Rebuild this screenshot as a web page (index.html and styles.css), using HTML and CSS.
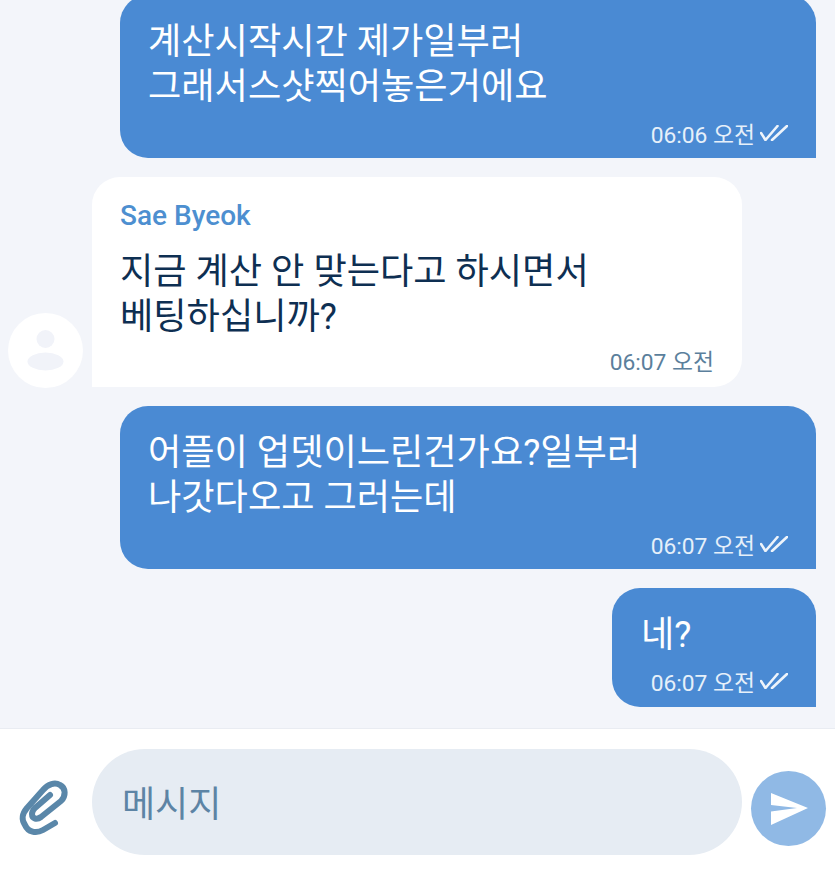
FILE: index.html
```html
<!DOCTYPE html>
<html lang="ko">
<head>
<meta charset="utf-8">
<title>Chat</title>
<link rel="stylesheet" href="styles.css">
</head>
<body>
<div class="screen">
  <main class="messages">
    <div class="row out">
      <div class="bubble out-bubble wide">
        <p class="text">계산시작시간 제가일부러<br>그래서스샷찍어놓은거에요</p>
        <div class="meta"><span>06:06 오전</span><svg class="ticks" viewBox="0 0 28 16"><path d="M1 8 5.500 15 17.500 1M12 15 27 1"/></svg></div>
      </div>
    </div>
    <div class="row in">
      <div class="avatar"><svg viewBox="0 0 75 75"><circle cx="37.500" cy="26" r="9"/><ellipse cx="37.500" cy="48.500" rx="18" ry="9"/></svg></div>
      <div class="bubble in-bubble">
        <div class="name">Sae Byeok</div>
        <p class="text">지금 계산 안 맞는다고 하시면서<br>베팅하십니까?</p>
        <div class="meta"><span>06:07 오전</span></div>
      </div>
    </div>
    <div class="row out">
      <div class="bubble out-bubble wide">
        <p class="text">어플이 업뎃이느린건가요?일부러<br>나갓다오고 그러는데</p>
        <div class="meta"><span>06:07 오전</span><svg class="ticks" viewBox="0 0 28 16"><path d="M1 8 5.500 15 17.500 1M12 15 27 1"/></svg></div>
      </div>
    </div>
    <div class="row out">
      <div class="bubble out-bubble narrow">
        <p class="text">네?</p>
        <div class="meta"><span>06:07 오전</span><svg class="ticks" viewBox="0 0 28 16"><path d="M1 8 5.500 15 17.500 1M12 15 27 1"/></svg></div>
      </div>
    </div>
  </main>
  <footer class="composer">
    <svg class="clip" viewBox="15 775 56 64"><path d="M55 823 43 830C36 834 28 832 25 825 21 819 22 814 27 808L43 790C48 784 55 782 60 785 66 788 66 796 61 801L41 817C37 820 32 819 32 814 32 811 33 810 35 808L50 795"/></svg>
    <div class="input">메시지</div>
    <div class="send"><svg viewBox="0 0 75 75"><path d="M20 22 57 37 20 54V40.500L46 37 20 34Z"/></svg></div>
  </footer>
</div>
</body>
</html>
```

FILE: styles.css
```css
* { box-sizing: border-box; }
html, body { margin: 0; padding: 0; }
body {
  width: 835px;
  height: 878px;
  overflow: hidden;
  background: #f3f5fa;
  font-family: Roboto, "Noto Sans CJK KR", sans-serif;
}
.screen { display: flex; flex-direction: column; height: 878px; }
.messages {
  flex: 1;
  display: flex;
  flex-direction: column;
  gap: 19px;
  margin-top: -5px;
  padding-right: 19px;
}
.row { display: flex; }
.row.out { justify-content: flex-end; }
.row.in { align-items: flex-end; padding-left: 8px; gap: 9px; }
.bubble { border-radius: 28px; }
.out-bubble {
  background: #4a8ad3;
  color: #fff;
  border-bottom-right-radius: 0;
  padding: 24px 28px 9px 28px;
}
.out-bubble.wide { width: 696px; }
.out-bubble.narrow { width: 204px; padding-left: 29px; padding-bottom: 10px; }
.in-bubble {
  background: #fff;
  color: #0e2f52;
  width: 650px;
  height: 210px;
  border-bottom-left-radius: 0;
  padding: 22px 28px 7px 28px;
}
.text {
  margin: 0;
  font-size: 36.2px;
  line-height: 45px;
}
.name {
  color: #4d8fd0;
  font-size: 28px;
  font-weight: 500;
  line-height: 34px;
  margin-bottom: 16px;
}
.meta {
  display: flex;
  justify-content: flex-end;
  align-items: center;
  gap: 5px;
  height: 32px;
  margin-top: 8px;
  font-size: 22.800px;
  color: #e6f0fa;
}
.in-bubble .meta { color: #5b7f9c; margin-top: 5px; }
.ticks { width: 28px; height: 16px; flex: none; }
.ticks path { fill: none; stroke: #eef4fb; stroke-width: 2.600; stroke-linecap: round; stroke-linejoin: round; }
.avatar {
  width: 75px;
  height: 75px;
  border-radius: 50%;
  background: #fff;
  flex: none;
  margin-bottom: -1px;
}
.avatar svg { display: block; width: 75px; height: 75px; fill: #f1f3f9; }
.composer {
  flex: none;
  height: 150px;
  background: #fff;
  border-top: 1px solid #e9ecf2;
  display: flex;
  align-items: flex-start;
  padding-left: 15px;
}
.clip { width: 56px; height: 64px; flex: none; margin-top: 46px; }
.clip path { fill: none; stroke: #5a87a9; stroke-width: 6; stroke-linecap: round; stroke-linejoin: round; }
.input {
  width: 650px;
  height: 106px;
  margin-top: 20px;
  margin-left: 21px;
  border-radius: 53px;
  background: #e6ecf3;
  color: #5d84a5;
  font-size: 36px;
  line-height: 106px;
  padding-top: 3px;
  padding-left: 30px;
}
.send {
  width: 75px;
  height: 75px;
  margin-top: 42px;
  margin-left: 9px;
  border-radius: 50%;
  background: #90b9e5;
  flex: none;
}
.send svg { display: block; width: 75px; height: 75px; fill: #fff; }
```
